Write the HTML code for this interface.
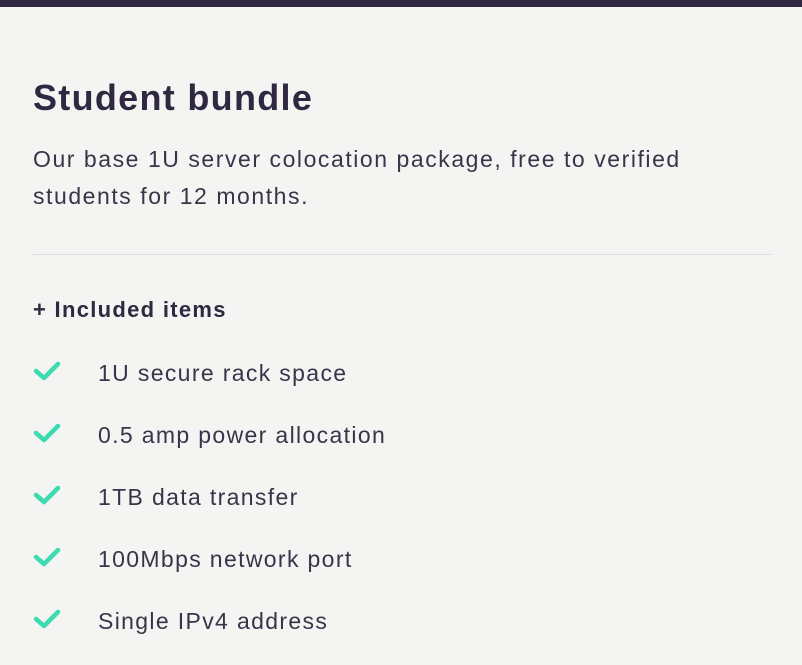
<!DOCTYPE html>
<html><head><style>
html,body{margin:0;padding:0}
body{width:802px;height:665px;background:#f4f4f3;font-family:"Liberation Sans",sans-serif;color:#2f2840;position:relative;overflow:hidden}
.bar{position:absolute;left:0;top:0;width:802px;height:7px;background:#2f2840}
.t{position:absolute;left:33px;white-space:nowrap}
h1{position:absolute;left:33px;top:77px;margin:0;font-size:36px;font-weight:bold;letter-spacing:1.3px}
.p{font-size:23px;line-height:37px;top:141px;color:#3a3449;letter-spacing:1.55px}
.hr{position:absolute;left:33px;top:254px;width:738px;height:1px;background:#dcdcdc}
.h{font-size:22px;font-weight:bold;top:297px;letter-spacing:1.3px}
.it{position:absolute;left:33px;height:30px}
.it svg{position:absolute;left:0;top:1px}
.it span{position:absolute;left:65px;top:1px;font-size:23px;white-space:nowrap;color:#3a3449;letter-spacing:1.35px}
</style></head><body>
<div class="bar"></div>
<h1>Student bundle</h1>
<div class="t p">Our base 1U server colocation package, free to verified<br>students for 12 months.</div>
<div class="hr"></div>
<div class="t h">+ Included items</div>
<div class="it" style="top:359px"><svg width="28" height="22" viewBox="0 0 28 22"><path d="M3 11 L11 18 L25 4" fill="none" stroke="#3cdcb0" stroke-width="4.5" stroke-linecap="round" stroke-linejoin="round"/></svg><span>1U secure rack space</span></div>
<div class="it" style="top:421px"><svg width="28" height="22" viewBox="0 0 28 22"><path d="M3 11 L11 18 L25 4" fill="none" stroke="#3cdcb0" stroke-width="4.5" stroke-linecap="round" stroke-linejoin="round"/></svg><span>0.5 amp power allocation</span></div>
<div class="it" style="top:483px"><svg width="28" height="22" viewBox="0 0 28 22"><path d="M3 11 L11 18 L25 4" fill="none" stroke="#3cdcb0" stroke-width="4.5" stroke-linecap="round" stroke-linejoin="round"/></svg><span>1TB data transfer</span></div>
<div class="it" style="top:545px"><svg width="28" height="22" viewBox="0 0 28 22"><path d="M3 11 L11 18 L25 4" fill="none" stroke="#3cdcb0" stroke-width="4.5" stroke-linecap="round" stroke-linejoin="round"/></svg><span>100Mbps network port</span></div>
<div class="it" style="top:607px"><svg width="28" height="22" viewBox="0 0 28 22"><path d="M3 11 L11 18 L25 4" fill="none" stroke="#3cdcb0" stroke-width="4.5" stroke-linecap="round" stroke-linejoin="round"/></svg><span>Single IPv4 address</span></div>
</body></html>
